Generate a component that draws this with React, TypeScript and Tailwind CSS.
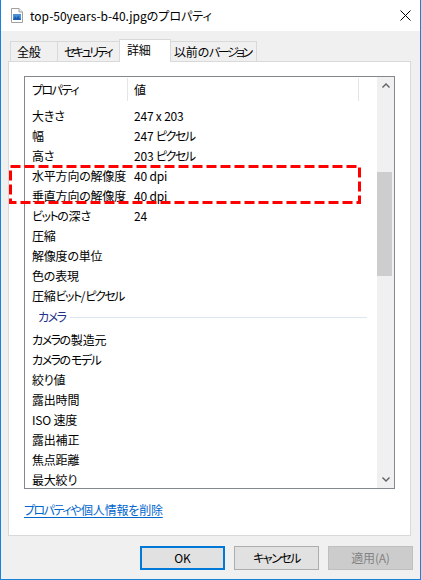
import React from "react";

type Row = { name: string; value?: string };

const imageRows: Row[] = [
  { name: "大きさ", value: "247 x 203" },
  { name: "幅", value: "247 ピクセル" },
  { name: "高さ", value: "203 ピクセル" },
  { name: "水平方向の解像度", value: "40 dpi" },
  { name: "垂直方向の解像度", value: "40 dpi" },
  { name: "ビットの深さ", value: "24" },
  { name: "圧縮" },
  { name: "解像度の単位" },
  { name: "色の表現" },
  { name: "圧縮ビット/ピクセル" },
];

const cameraRows: Row[] = [
  { name: "カメラの製造元" },
  { name: "カメラのモデル" },
  { name: "絞り値" },
  { name: "露出時間" },
  { name: "ISO 速度" },
  { name: "露出補正" },
  { name: "焦点距離" },
  { name: "最大絞り" },
];

const tabs = [
  { label: "全般", w: "w-[48px]" },
  { label: "セキュリティ", w: "w-[63px]" },
  { label: "詳細", w: "w-[52px]", active: true },
  { label: "以前のバージョン", w: "w-[87px]" },
];

// Yu Gothic UI has narrow kana, squeeze katakana runs a bit
const Kana = ({ text, tight }: { text: string; tight?: boolean }) => (
  <>
    {text.split(/([\u30A0-\u30FF]+)/).map((part, i) =>
      /[\u30A0-\u30FF]/.test(part) ? (
        <span key={i} className={tight ? "tracking-[-2.5px]" : "tracking-[-1.5px]"}>
          {part}
        </span>
      ) : (
        <React.Fragment key={i}>{part}</React.Fragment>
      )
    )}
  </>
);

const renderRow = (row: Row) => (
  <div key={row.name} className="h-[20px] flex items-center shrink-0 whitespace-nowrap">
    <div className="w-[103px] pl-[7px]">
      <Kana text={row.name} />
    </div>
    <div className="pl-[6px]">{row.value && <Kana text={row.value} />}</div>
  </div>
);

const FileIcon = () => (
  <svg width="12" height="15" viewBox="0 0 12 15">
    <path d="M0.5 0.5 H8 L11.5 4 V14.5 H0.5 Z" fill="#fff" stroke="#a0a0a0" />
    <path d="M8 0.5 V4 H11.5" fill="#f0f0f0" stroke="#a0a0a0" />
    <rect x="2" y="6" width="8" height="6" fill="#4a90d9" />
    <path d="M2 12 L4 8 L5.5 10 L7 7.5 L10 12 Z" fill="#1c5fb0" />
  </svg>
);

const App = () => {
  return (
    <div className="relative w-[421px] h-[580px] bg-[#f0f0f0] border-x border-b border-[#1883d7] flex flex-col font-['Noto_Sans_CJK_JP','Noto_Sans',sans-serif] text-[12px] leading-[16px] text-black [font-feature-settings:'palt'] tracking-[-0.2px] overflow-hidden">
      {/* title bar */}
      <div className="h-[31px] bg-white flex items-center shrink-0">
        <div className="ml-[10px]">
          <FileIcon />
        </div>
        <div className="ml-[7px] tracking-normal">top-50years-b-40.jpgのプロパティ</div>
        <svg className="ml-auto mr-[9px]" width="11" height="11" viewBox="0 0 11 11">
          <path d="M0.5 0.5 L10.5 10.5 M10.5 0.5 L0.5 10.5" stroke="#000" strokeWidth="1" />
        </svg>
      </div>

      {/* tabs */}
      <div className="mt-[8px] h-[22px] flex items-end pl-[9px] shrink-0">
        {tabs.map((t, i) =>
          t.active ? (
            <div
              key={t.label}
              className={`${t.w} h-[23px] -mb-px relative z-10 bg-white border-x border-t border-[#d9d9d9] -ml-px flex items-center pl-[7px] pb-[3px] whitespace-nowrap`}
            >
              {t.label}
            </div>
          ) : (
            <div
              key={t.label}
              className={`${t.w} h-[20px] border-x border-t border-[#d9d9d9] flex items-center whitespace-nowrap ${i > 0 ? "-ml-px" : ""} ${i === 3 ? "pl-[3px]" : "pl-[6px]"}`}
            >
              <Kana text={t.label} tight />
            </div>
          )
        )}
      </div>

      {/* panel */}
      <div className="ml-[7px] w-[403px] h-[475px] bg-white border border-[#d9d9d9] pt-[14px] shrink-0 flex flex-col">
        <div className="ml-[15px] w-[371px] h-[413px] border border-[#828790] flex overflow-hidden">
          <div className="flex-1 flex flex-col overflow-hidden">
            {/* header */}
            <div className="h-[25px] flex shrink-0">
              <div className="w-[102px] pl-[7px] flex items-center">
                <Kana text="プロパティ" />
              </div>
              <div className="w-px my-[1px] bg-[#e5e5e5]" />
              <div className="w-[230px] pl-[6px] flex items-center">値</div>
              <div className="w-px my-[1px] bg-[#e5e5e5]" />
            </div>
            <div className="h-[4px] shrink-0" />
            {imageRows.map(renderRow)}
            <div className="h-[24px] flex items-center shrink-0 pb-[2px]">
              <span className="pl-[13px] text-[#1e3287]">
                <Kana text="カメラ" />
              </span>
              <div className="flex-1 h-px bg-[#dde5ef] ml-[5px] mr-[10px]" />
            </div>
            {cameraRows.map(renderRow)}
          </div>

          {/* scrollbar */}
          <div className="w-[17px] bg-[#f0f0f0] flex flex-col shrink-0">
            <div className="h-[17px] flex items-center justify-center">
              <svg width="8" height="5" viewBox="0 0 8 5">
                <path d="M0.5 4.5 L4 1 L7.5 4.5" fill="none" stroke="#606060" strokeWidth="1.4" />
              </svg>
            </div>
            <div className="flex-1 pt-[78px]">
              <div className="w-[15px] h-[104px] bg-[#cdcdcd]" />
            </div>
            <div className="h-[17px] flex items-center justify-center">
              <svg width="8" height="5" viewBox="0 0 8 5">
                <path d="M0.5 0.5 L4 4 L7.5 0.5" fill="none" stroke="#606060" strokeWidth="1.4" />
              </svg>
            </div>
          </div>
        </div>

        <div className="ml-[15px] mt-[13px]">
          <span className="text-[#0066cc] underline underline-offset-[2px]">
            <Kana text="プロパティや個人情報を削除" />
          </span>
        </div>
      </div>

      {/* buttons */}
      <div className="mt-[10px] flex justify-end gap-[9px] pr-[7px]">
        <button className="w-[85px] h-[24px] bg-[#e1e1e1] border-2 border-[#0078d7] flex items-center justify-center">
          OK
        </button>
        <button className="w-[85px] h-[24px] bg-[#e1e1e1] border border-[#adadad] flex items-center justify-center">
          <Kana text="キャンセル" />
        </button>
        <button className="w-[85px] h-[24px] bg-[#cccccc] border border-[#bfbfbf] text-[#838383] flex items-center justify-center">
          適用(A)
        </button>
      </div>

      {/* annotation */}
      <svg className="absolute left-0 top-0 pointer-events-none" width="421" height="580">
        <rect
          x="9.5"
          y="166.5"
          width="349"
          height="36"
          fill="none"
          stroke="#ff0000"
          strokeWidth="3"
          strokeDasharray="10 4"
        />
      </svg>
    </div>
  );
};

export default App;
